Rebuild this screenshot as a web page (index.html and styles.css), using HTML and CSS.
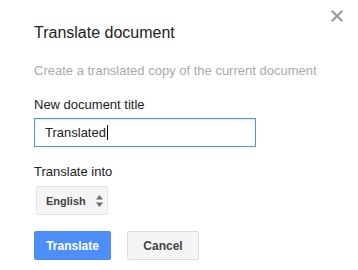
FILE: index.html
```html
<!DOCTYPE html>
<html>
<head>
<meta charset="utf-8">
<link rel="stylesheet" href="styles.css">
</head>
<body>
<div class="dialog">
  <button class="close" aria-label="Close">
    <svg width="12" height="12" viewBox="0 0 12 12"><path d="M1.5 1.5 L10.5 10.5 M10.5 1.5 L1.5 10.5" stroke="#9a9a9a" stroke-width="2.2" stroke-linecap="square" fill="none"/></svg>
  </button>
  <div class="title">Translate document</div>
  <div class="subtitle">Create a translated copy of the current document</div>
  <div class="label first">New document title</div>
  <div class="input"><span>Translated</span><span class="caret"></span></div>
  <div class="label second">Translate into</div>
  <div class="select">
    <span>English</span>
    <svg class="arrows" width="7" height="12" viewBox="0 0 7 12"><path d="M3.5 0 L7 4.5 L0 4.5 Z M0 7.5 L7 7.5 L3.5 12 Z" fill="#6f6f6f"/></svg>
  </div>
  <div class="buttons">
    <button class="btn primary">Translate</button>
    <button class="btn">Cancel</button>
  </div>
</div>
</body>
</html>
```

FILE: styles.css
```css
html, body {
  margin: 0;
  padding: 0;
  background: #fff;
}
body {
  width: 358px;
  height: 270px;
  overflow: hidden;
  font-family: "Liberation Sans", Arial, sans-serif;
}
.dialog {
  position: relative;
  display: flex;
  flex-direction: column;
  align-items: flex-start;
  padding: 23px 0 0 34px;
}
.close {
  position: absolute;
  left: 330px;
  top: 9px;
  width: 14px;
  height: 14px;
  padding: 1px;
  border: 0;
  background: none;
  display: flex;
}
.title {
  font-size: 16px;
  line-height: 20px;
  color: #222;
}
.subtitle {
  margin-top: 20px;
  font-size: 13px;
  line-height: 16px;
  color: #aaa;
}
.label {
  font-size: 13px;
  line-height: 16px;
  color: #222;
}
.label.first { margin-top: 18px; }
.label.second { margin-top: 17px; }
.input {
  margin-top: 5px;
  box-sizing: border-box;
  width: 222px;
  height: 29px;
  border: 1px solid #4d90fe;
  padding: 0 10px;
  display: flex;
  align-items: center;
  font-size: 13px;
  color: #222;
  box-shadow: inset 0 1px 2px rgba(0,0,0,0.1);
}
.caret {
  width: 1px;
  height: 15px;
  background: #000;
  margin-left: 1px;
}
.select {
  margin-top: 6px;
  margin-left: 2px;
  box-sizing: border-box;
  width: 72px;
  height: 29px;
  border: 1px solid #e3e3e3;
  border-radius: 2px;
  background: #f5f5f5;
  display: flex;
  align-items: center;
  padding: 0 0 0 9px;
  font-size: 11px;
  font-weight: bold;
  color: #444;
}
.arrows {
  margin-left: 10px;
}
.buttons {
  margin-top: 16px;
  display: flex;
  gap: 16px;
}
.btn {
  box-sizing: border-box;
  height: 29px;
  width: 72px;
  padding: 0;
  border: 1px solid #dcdcdc;
  border-radius: 2px;
  background: #f5f5f5;
  color: #444;
  font-family: "Liberation Sans", Arial, sans-serif;
  font-size: 12px;
  font-weight: bold;
}
.btn.primary {
  width: 77px;
  background: #4d8ff9;
  border-color: #4a8af2;
  color: #fff;
}
```
